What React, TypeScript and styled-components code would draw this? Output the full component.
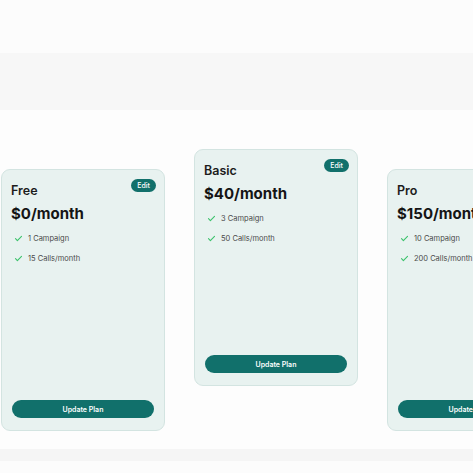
import React from "react";
import styled, { createGlobalStyle } from "styled-components";

const GlobalStyle = createGlobalStyle`
  html, body {
    margin: 0;
    padding: 0;
    background: #fcfcfc;
    font-family: Inter, "Noto Sans", sans-serif;
  }
`;

type Plan = {
  name: string;
  price: string;
  features: string[];
  raised?: boolean;
};

const plans: Plan[] = [
  { name: "Free", price: "$0/month", features: ["1 Campaign", "15 Calls/month"] },
  { name: "Basic", price: "$40/month", features: ["3 Campaign", "50 Calls/month"], raised: true },
  { name: "Pro", price: "$150/month", features: ["10 Campaign", "200 Calls/month"] },
];

const Check = () => (
  <svg width="9" height="9" viewBox="0 0 24 24" fill="none" stroke="#3cc26c" strokeWidth="3" strokeLinecap="round" strokeLinejoin="round">
    <path d="M4 12.5l5 5L20 6.5" />
  </svg>
);

const App = () => {
  return (
    <>
      <GlobalStyle />
      <Page>
        <Header />
        <Band />
        <Section>
          <Row>
            {plans.map((p) => (
              <Card key={p.name} raised={p.raised}>
                <Top>
                  <Title>{p.name}</Title>
                  <Edit>Edit</Edit>
                </Top>
                <Price>{p.price}</Price>
                <Features>
                  {p.features.map((f) => (
                    <Feature key={f}>
                      <Check />
                      <span>{f}</span>
                    </Feature>
                  ))}
                </Features>
                <Button>Update Plan</Button>
              </Card>
            ))}
          </Row>
        </Section>
        <BottomBand />
        <Footer />
      </Page>
    </>
  );
};

export default App;

const Page = styled.div`
  width: 473px;
  height: 473px;
  overflow: hidden;
  display: flex;
  flex-direction: column;
  background: #fcfcfc;
`;

const Header = styled.div`
  height: 53px;
  flex-shrink: 0;
  background: #fcfcfc;
`;

const Band = styled.div`
  height: 57px;
  flex-shrink: 0;
  background: #f7f7f7;
`;

const Section = styled.div`
  background: #fdfdfd;
  padding: 39px 0 18px 1px;
`;

const Row = styled.div`
  display: flex;
  align-items: flex-start;
  gap: 29px;
`;

const Card = styled.div<{ raised?: boolean }>`
  flex: 0 0 164px;
  box-sizing: border-box;
  height: ${({ raised }) => (raised ? "237px" : "262px")};
  margin-top: ${({ raised }) => (raised ? "0" : "20px")};
  background: #e8f2f0;
  border: 1px solid #d3e4e1;
  border-radius: 9px;
  padding: 8px 10px 12px 9px;
  display: flex;
  flex-direction: column;
`;

const Top = styled.div`
  display: flex;
  justify-content: space-between;
  align-items: flex-start;
  height: 22px;
`;

const Title = styled.div`
  font-size: 12.5px;
  font-weight: 600;
  color: #1c1c1c;
  margin-top: 5px;
`;

const Edit = styled.div`
  background: #11706b;
  color: #fff;
  font-size: 7px;
  font-weight: 500;
  border-radius: 8px;
  padding: 0 6px;
  height: 13px;
  line-height: 13px;
  margin-top: 1px;
  margin-right: -2px;
`;

const Price = styled.div`
  font-size: 15px;
  font-weight: 700;
  color: #151515;
  margin-top: 4px;
`;

const Features = styled.div`
  display: flex;
  flex-direction: column;
  gap: 9px;
  margin-top: 10px;
  padding-left: 3px;
`;

const Feature = styled.div`
  display: flex;
  align-items: center;
  gap: 5px;
  font-size: 7.5px;
  color: #4a4a4a;
  height: 11px;
`;

const Button = styled.div`
  margin-top: auto;
  margin-left: 1px;
  height: 18px;
  border-radius: 9px;
  background: #11706b;
  color: #fff;
  font-size: 7px;
  font-weight: 600;
  display: flex;
  justify-content: center;
  align-items: center;
`;

const BottomBand = styled.div`
  height: 12px;
  flex-shrink: 0;
  background: #f5f5f5;
`;

const Footer = styled.div`
  flex: 1;
  background: #fcfcfc;
`;
